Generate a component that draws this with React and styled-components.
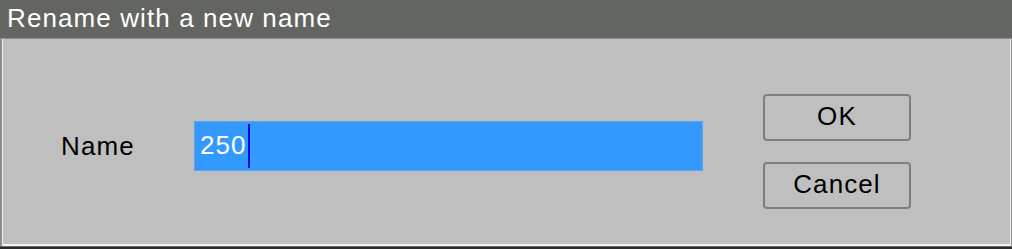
import styled, { createGlobalStyle } from "styled-components";

const Global = createGlobalStyle`
  html, body {
    margin: 0;
    padding: 0;
    background: #2b2b2b;
  }
  #root {
    width: 1012px;
    height: 249px;
    overflow: hidden;
  }
`;

const Dialog = styled.div`
  width: 1012px;
  height: 249px;
  display: flex;
  flex-direction: column;
  font-family: "Liberation Sans", Arial, sans-serif;
  font-size: 26px;
  letter-spacing: 1.1px;
`;

const TitleBar = styled.div`
  height: 38px;
  flex: none;
  background: #636561;
  color: #ffffff;
  display: flex;
  align-items: center;
  padding-left: 7px;
  padding-bottom: 1px;
  box-sizing: border-box;
`;

const Body = styled.div`
  height: 208px;
  flex: none;
  box-sizing: border-box;
  background: #bfbfbf;
  border-top: 1px solid #8e8e8e;
  border-left: 2px solid #8e8e8e;
  border-right: 1px solid #8e8e8e;
  box-shadow: inset 1px 0 0 #f2f2f2, inset -1px 0 0 #f2f2f2,
    inset 0 -2px 0 #f2f2f2;
  display: flex;
  align-items: flex-start;
  padding: 55px 0 0 59px;
`;

const Footer = styled.div`
  flex: 1;
  background: #2b2b2b;
  border-top: 1px solid #6a6a6a;
`;

const Field = styled.div`
  display: flex;
  align-items: center;
  margin-top: 27px;
`;

const Label = styled.div`
  width: 133px;
  color: #000;
`;

const TextBox = styled.div`
  width: 509px;
  height: 50px;
  box-sizing: border-box;
  background: #3399ff;
  border: 1px solid #5aa7ee;
  color: #ffffff;
  display: flex;
  align-items: center;
  padding-left: 5px;
  padding-bottom: 2px;
`;

const Caret = styled.span`
  display: inline-block;
  width: 2px;
  height: 44px;
  background: #0a0ad8;
  margin-left: 1px;
  margin-top: 2px;
`;

const Buttons = styled.div`
  display: flex;
  flex-direction: column;
  gap: 21px;
  margin-left: 60px;
`;

const Button = styled.button`
  width: 148px;
  height: 47px;
  box-sizing: border-box;
  background: transparent;
  border: 2px solid #7f7f7f;
  border-radius: 4px;
  font: inherit;
  letter-spacing: inherit;
  color: #000;
  padding: 0 0 3px;
  display: flex;
  align-items: center;
  justify-content: center;
`;

export default function App() {
  return (
    <>
      <Global />
      <Dialog>
        <TitleBar>Rename with a new name</TitleBar>
        <Body>
          <Field>
            <Label>Name</Label>
            <TextBox>
              250
              <Caret />
            </TextBox>
          </Field>
          <Buttons>
            <Button>OK</Button>
            <Button>Cancel</Button>
          </Buttons>
        </Body>
        <Footer />
      </Dialog>
    </>
  );
}
